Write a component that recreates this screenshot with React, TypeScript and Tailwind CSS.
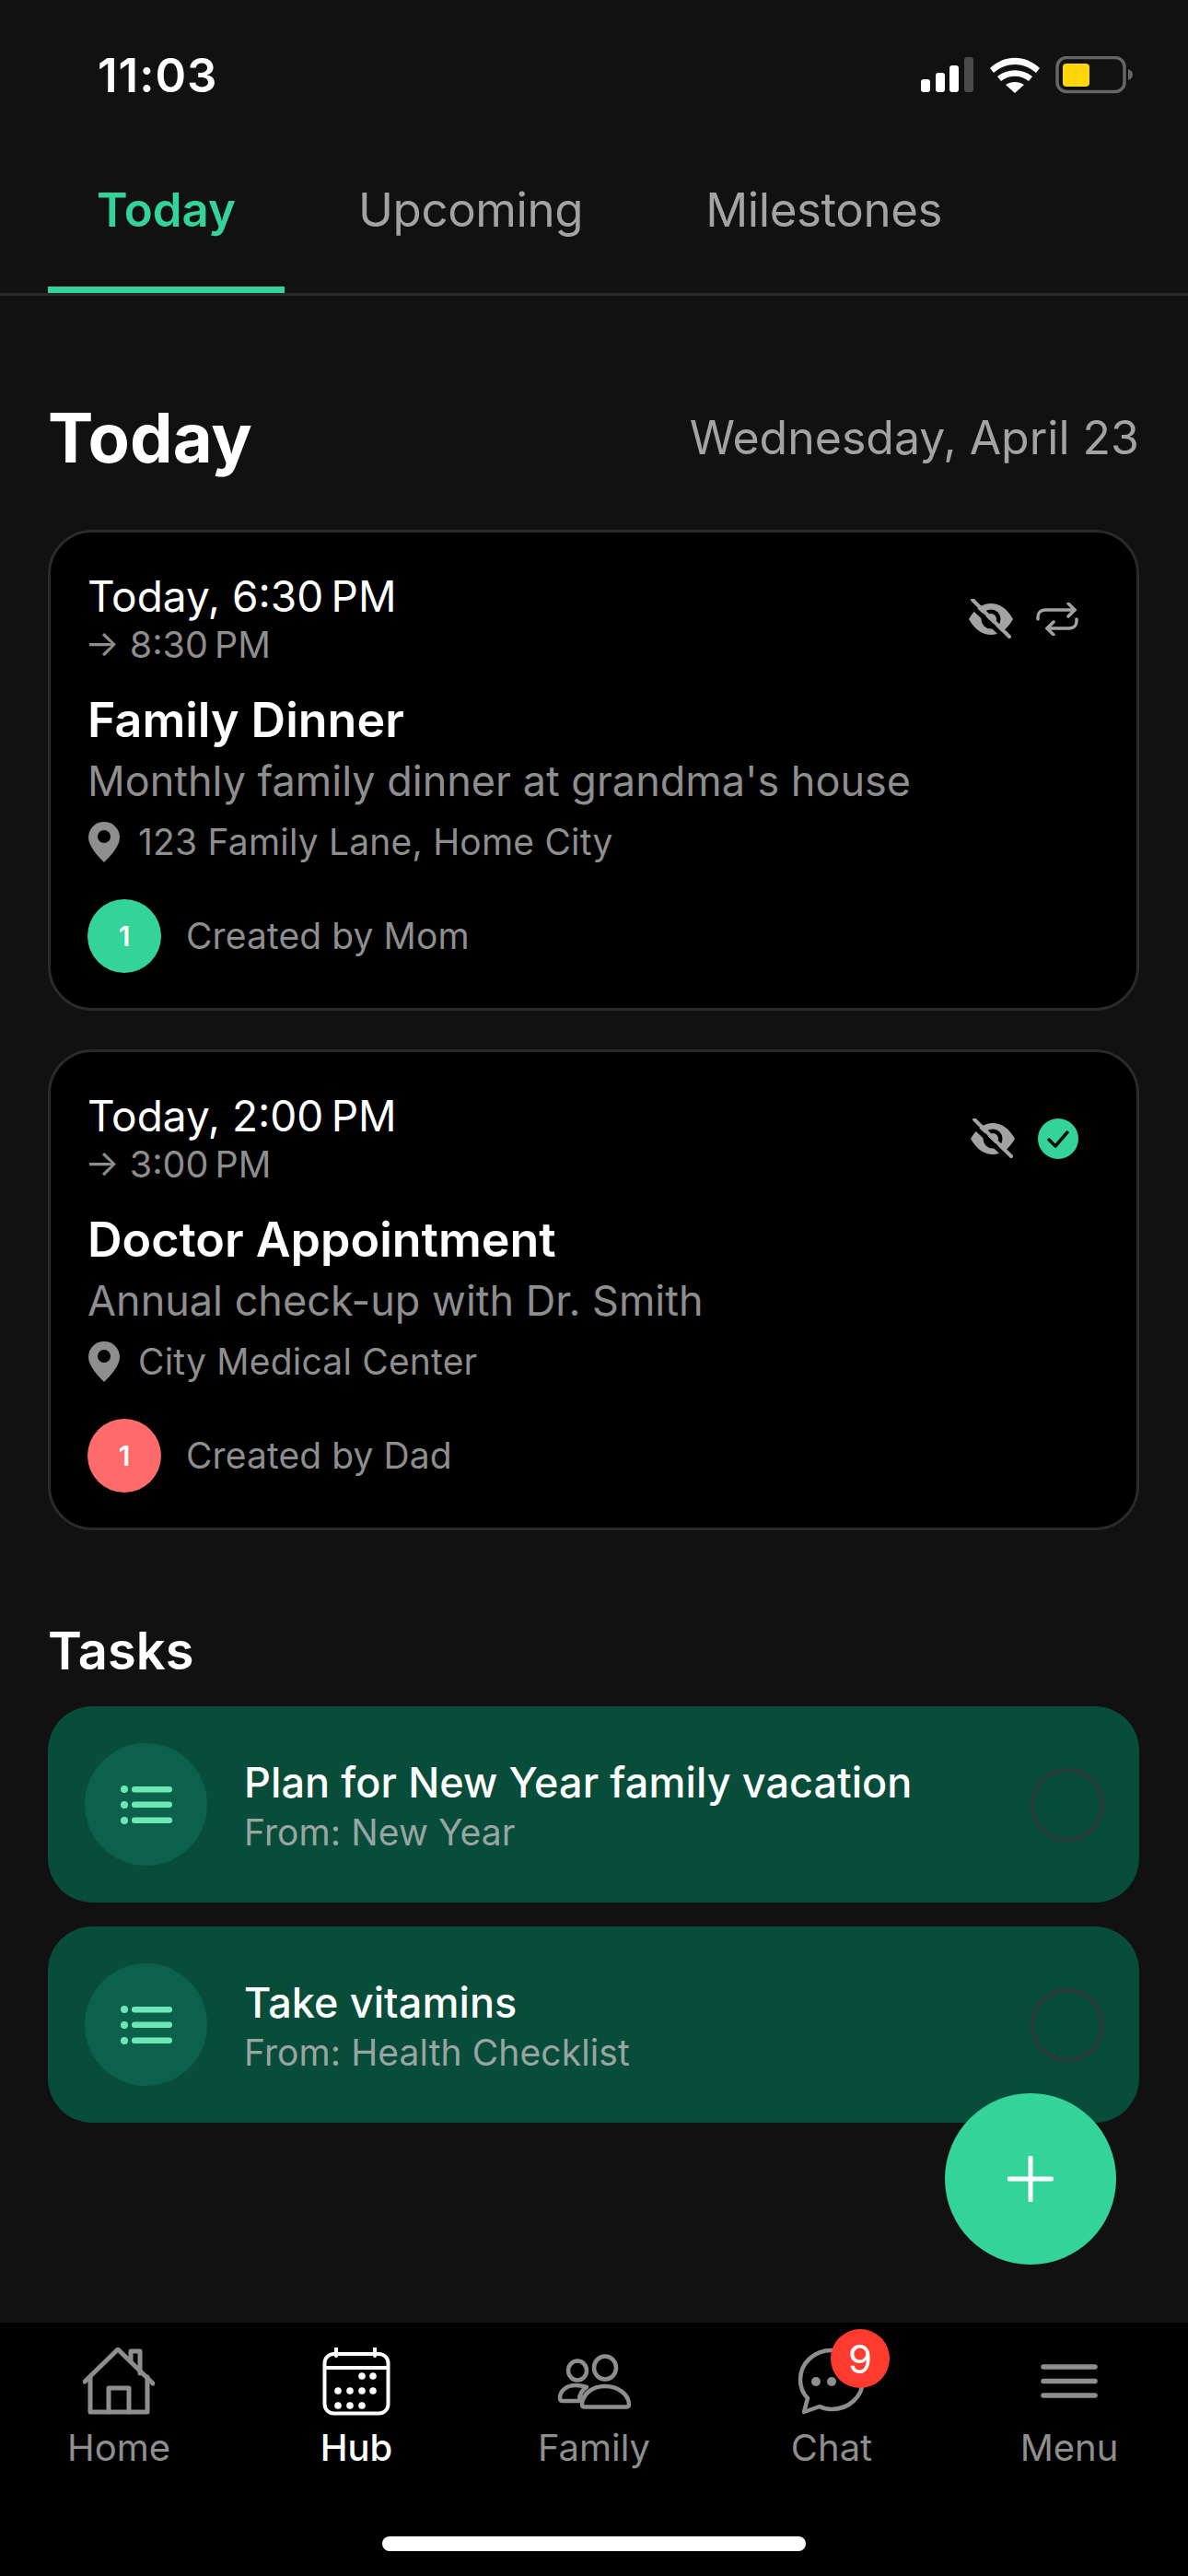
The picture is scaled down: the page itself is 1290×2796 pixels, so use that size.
import type { ReactNode } from 'react';

const font = "font-['Inter',sans-serif]";

function EyeOff() {
  return (
    <svg width="50" height="44" viewBox="0 0 50 44">
      <path d="M1 22C8 10 16 5 25 5s17 5 24 17c-7 12-15 17-24 17S8 34 1 22Z" fill="#a3a3a3" />
      <circle cx="25" cy="22" r="10.500" fill="#000" />
      <circle cx="25" cy="22" r="6" fill="#a3a3a3" />
      <path d="M1 5l40 38" stroke="#000" strokeWidth="5" />
      <path d="M5 1l40 40" stroke="#a3a3a3" strokeWidth="4" strokeLinecap="round" />
    </svg>
  );
}

function RepeatIcon() {
  return (
    <svg width="46" height="36" viewBox="0 0 46 36" fill="none" stroke="#a3a3a3" strokeWidth="3.500" strokeLinecap="round" strokeLinejoin="round">
      <path d="M2 18v-2c0-5 3-8 8-8h32" />
      <path d="M35 1l7 7-7 7" />
      <path d="M44 18v2c0 5-3 8-8 8H12" />
      <path d="M19 21l-7 7 7 7" />
    </svg>
  );
}

function CheckBadge() {
  return (
    <svg width="44" height="44" viewBox="0 0 44 44">
      <circle cx="22" cy="22" r="22" fill="#34d399" />
      <path d="M12 23l7 7 13-15" fill="none" stroke="#0b0b0b" strokeWidth="3.500" strokeLinecap="round" strokeLinejoin="round" />
    </svg>
  );
}

function Pin() {
  return (
    <svg width="36" height="46" viewBox="0 0 36 46" className="shrink-0">
      <path d="M18 1C8.500 1 1 8.500 1 18c0 10 11 21 17 27 6-6 17-17 17-27C35 8.500 27.500 1 18 1Z" fill="#8e8e8e" />
      <circle cx="18" cy="17" r="7" fill="#000" />
    </svg>
  );
}

function ListIcon() {
  return (
    <svg width="56" height="44" viewBox="0 0 56 44" fill="#6ee7b7">
      <circle cx="4" cy="5" r="4" />
      <circle cx="4" cy="22" r="4" />
      <circle cx="4" cy="39" r="4" />
      <rect x="12" y="2" width="44" height="6.500" rx="3" />
      <rect x="12" y="18.500" width="44" height="6.500" rx="3" />
      <rect x="12" y="35.500" width="44" height="6.500" rx="3" />
    </svg>
  );
}

function HomeIcon() {
  return (
    <svg width="78" height="73" viewBox="0 0 78 73" fill="none" stroke="#8e8e8e" strokeWidth="5" strokeLinejoin="round" strokeLinecap="round">
      <path d="M2 37L38 2l38 37" />
      <path d="M8 32v38h62V32" />
      <path d="M28 70V44h22v26" />
      <path d="M52 15V4h10v24" />
    </svg>
  );
}

function HubIcon() {
  const dots = [
    [43, 31], [55, 31],
    [17, 47], [30, 47], [43, 47], [55, 47],
    [17, 63], [30, 63], [43, 63],
  ];
  return (
    <svg width="74" height="74" viewBox="0 0 74 74" fill="none">
      <rect x="2.500" y="7" width="69" height="64.500" rx="10" stroke="#fff" strokeWidth="4" />
      <path d="M2 22h70" stroke="#fff" strokeWidth="4" />
      <path d="M15 1v8M57 1v8" stroke="#fff" strokeWidth="4" strokeLinecap="round" />
      {dots.map(([x, y]) => (
        <circle key={`${x}-${y}`} cx={x} cy={y} r="3.800" fill="#fff" />
      ))}
    </svg>
  );
}

function FamilyIcon() {
  return (
    <svg width="80" height="60" viewBox="0 0 80 60" fill="none" stroke="#8e8e8e" strokeWidth="4.500" strokeLinejoin="round">
      <ellipse cx="22" cy="18" rx="10" ry="10.500" />
      <ellipse cx="52" cy="15" rx="12" ry="12.500" />
      <path d="M3 48C3 40 10 34 20 34c5 0 9 1 12 2-5 3-8 8-8 15H6c-2 0-3-1-3-3Z" />
      <path d="M27 55c0-11 11-20 25-20s26 9 26 20c0 2-1 2.500-3 2.500H30c-2 0-3-.5-3-2.500Z" />
    </svg>
  );
}

function ChatIcon() {
  return (
    <svg width="74" height="74" viewBox="0 0 74 74" fill="none">
      <path d="M37 3C18 3 3 17 3 35c0 8 3 15 8 20l-4 15 17-6c4 2 9 3 13 3 19 0 34-14 34-32S56 3 37 3Z" stroke="#8e8e8e" strokeWidth="4.500" strokeLinejoin="round" />
      <circle cx="20" cy="37" r="5" fill="#8e8e8e" />
      <circle cx="37" cy="37" r="5" fill="#8e8e8e" />
    </svg>
  );
}

function MenuIcon() {
  return (
    <svg width="62" height="73" viewBox="0 0 62 73" fill="none" stroke="#8e8e8e" strokeWidth="5.500" strokeLinecap="round">
      <path d="M3 21h56M3 36.500h56M3 52h56" />
    </svg>
  );
}

function StatusIcons() {
  return (
    <svg width="234" height="42" viewBox="0 0 234 42" className="shrink-0">
      <rect x="1" y="25" width="10" height="14" rx="3" fill="#fff" />
      <rect x="17" y="18" width="10" height="21" rx="3" fill="#fff" />
      <rect x="32" y="10" width="10" height="29" rx="3" fill="#fff" />
      <rect x="48" y="1" width="10" height="38" rx="3" fill="#4a4a4a" />
      <path d="M76 13C92 -2 114 -2 130 13l-4 5C112 6 94 6 80 18Z" fill="#fff" />
      <path d="M84 22c11-9 27-9 38 0l-4 5c-9-7-21-7-30 0Z" fill="#fff" />
      <path d="M93 31c6-4 14-4 20 0l-10 9Z" fill="#fff" />
      <rect x="149" y="1.500" width="73" height="37" rx="10" fill="none" stroke="#666" strokeWidth="3.500" />
      <rect x="155" y="8" width="29" height="25" rx="4" fill="#ffd60a" />
      <path d="M226 14c3 1 5 3 5 6s-2 5-5 6Z" fill="#666" />
    </svg>
  );
}

function EventCard({ time, end, title, desc, place, by, color, badge }: {
  time: string; end: string; title: string; desc: string; place: string; by: string; color: string; badge: ReactNode;
}) {
  return (
    <div className="h-[522px] rounded-[48px] border-[3px] border-[#2a2a2a] bg-black pl-[40px] pr-[63px] pt-[42px]">
      <div className="flex items-center justify-between">
        <div>
          <div className="text-[46px] leading-[54px] text-white">{time}</div>
          <div className="mt-[2px] -ml-[3px] text-[39.500px] leading-[48px] text-[#8e8e8e]">{end}</div>
        </div>
        <div className="flex items-center gap-[24px]">
          <EyeOff />
          {badge}
        </div>
      </div>
      <div className="mt-[25px] text-[52px] leading-[66px] font-semibold text-white">{title}</div>
      <div className="mt-[3px] text-[45px] leading-[60px] text-[#8e8e8e]">{desc}</div>
      <div className="mt-[11px] flex h-[50px] items-center gap-[19px] text-[39px] tracking-[0.2px] text-[#8e8e8e]">
        <Pin />
        <span>{place}</span>
      </div>
      <div className="mt-[37px] flex items-center gap-[27px]">
        <div className={`flex size-[80px] items-center justify-center rounded-full text-[30px] font-semibold text-white ${color}`}>1</div>
        <span className="text-[39px] tracking-[0.1px] text-[#8e8e8e]">{by}</span>
      </div>
    </div>
  );
}

function TaskRow({ title, from }: { title: string; from: string }) {
  return (
    <div className="flex h-[213px] items-center rounded-[48px] bg-[#084d3a] pl-[40px] pr-[38px]">
      <div className="flex size-[133px] items-center justify-center rounded-full bg-[#0b6149]">
        <ListIcon />
      </div>
      <div className="ml-[40px] flex-1">
        <div className="text-[45px] leading-[60px] tracking-[0.1px] font-medium text-white">{title}</div>
        <div className="text-[39px] leading-[48px] tracking-[0.1px] text-[#98a5a0]">{from}</div>
      </div>
      <div className="size-[80px] rounded-full border-[4px] border-[#2a3a35]" />
    </div>
  );
}

function NavItem({ icon, label, active }: { icon: ReactNode; label: string; active?: boolean }) {
  return (
    <div className="flex flex-1 flex-col items-center">
      <div className="relative flex h-[73px] items-center justify-center">{icon}</div>
      <div className={`mt-[12px] text-[40px] leading-[48px] ${active ? 'font-medium text-white' : 'text-[#8e8e8e]'}`}>{label}</div>
    </div>
  );
}

export default function App() {
  return (
    <div className={`relative flex h-[2796px] w-[1290px] flex-col overflow-hidden bg-[#111111] ${font}`}>
      <div className="flex h-[164px] items-center justify-between pl-[106px] pr-[57px]">
        <span className="text-[51px] font-semibold tracking-[1px] text-white">11:03</span>
        <StatusIcons />
      </div>

      <div className="flex h-[157px] gap-[27px] border-b-[3px] border-[#2a2a2a] pl-[52px]">
        <div className="border-b-[7px] border-[#34d399] px-[53px] pt-[34px] text-[51px] leading-[60px] font-semibold text-[#34d399]">Today</div>
        <div className="px-[53px] pt-[34px] text-[51px] leading-[60px] tracking-[-0.4px] text-[#a3a3a3]">Upcoming</div>
        <div className="px-[53px] pt-[34px] text-[51px] leading-[60px] tracking-[-0.4px] text-[#a3a3a3]">Milestones</div>
      </div>

      <main className="flex-1 pl-[52px] pr-[53px] pt-[106px]">
        <div className="flex h-[96px] items-center justify-between">
          <h1 className="text-[74px] font-bold text-white">Today</h1>
          <span className="text-[50px] text-[#a3a3a3]">Wednesday, April 23</span>
        </div>

        <div className="mt-[52px] flex flex-col gap-[42px]">
          <EventCard
            time={'Today, 6:30\u202fPM'}
            end={'→ 8:30\u202fPM'}
            title="Family Dinner"
            desc="Monthly family dinner at grandma's house"
            place="123 Family Lane, Home City"
            by="Created by Mom"
            color="bg-[#34d399]"
            badge={<RepeatIcon />}
          />
          <EventCard
            time={'Today, 2:00\u202fPM'}
            end={'→ 3:00\u202fPM'}
            title="Doctor Appointment"
            desc="Annual check-up with Dr. Smith"
            place="City Medical Center"
            by="Created by Dad"
            color="bg-[#ff6b6b]"
            badge={<CheckBadge />}
          />
        </div>

        <h2 className="mt-[98px] text-[56px] leading-[66px] font-semibold text-white">Tasks</h2>

        <div className="mt-[27px] flex flex-col gap-[26px]">
          <TaskRow title="Plan for New Year family vacation" from="From: New Year" />
          <TaskRow title="Take vitamins" from="From: Health Checklist" />
        </div>
      </main>

      <nav className="relative h-[275px] bg-black pt-[27px]">
        <div className="flex">
          <NavItem icon={<HomeIcon />} label="Home" />
          <NavItem icon={<HubIcon />} label="Hub" active />
          <NavItem icon={<FamilyIcon />} label="Family" />
          <NavItem
            label="Chat"
            icon={
              <>
                <ChatIcon />
                <span className="absolute left-[36px] top-[-20px] flex size-[64px] items-center justify-center rounded-full bg-[#ff3b30] text-[42px] text-white">9</span>
              </>
            }
          />
          <NavItem icon={<MenuIcon />} label="Menu" />
        </div>
        <div className="mx-auto mt-[72px] h-[16px] w-[460px] rounded-full bg-white" />
      </nav>

      <button className="absolute bottom-[338px] right-[78px] flex size-[186px] items-center justify-center rounded-full bg-[#34d399]">
        <svg width="50" height="50" viewBox="0 0 50 50" stroke="#fff" strokeWidth="5" strokeLinecap="round">
          <path d="M25 2v46M2 25h46" />
        </svg>
      </button>
    </div>
  );
}
